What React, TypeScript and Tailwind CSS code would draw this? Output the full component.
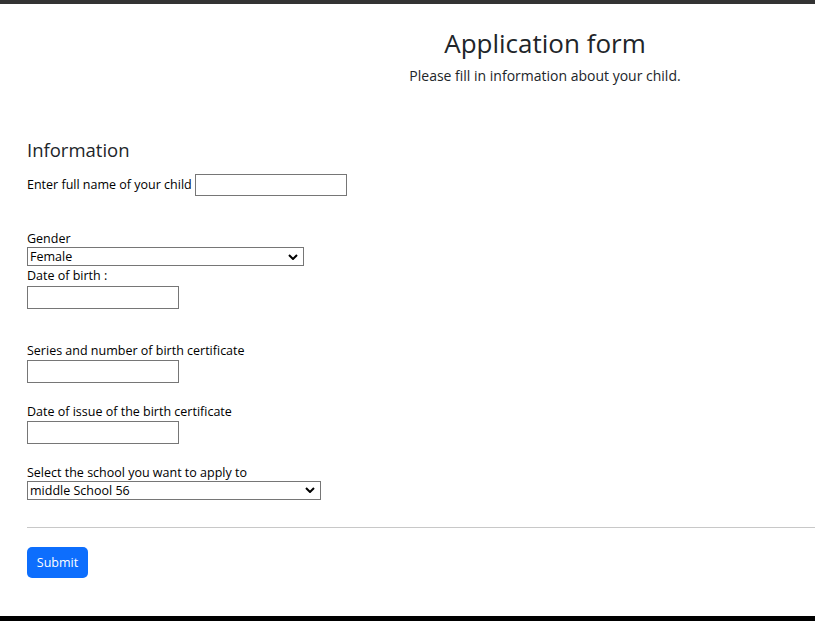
import React from "react";

export default function App() {
  const font = { fontFamily: '"Open Sans", "Noto Sans", sans-serif' };
  const arrow = {
    backgroundImage:
      "url(\"data:image/svg+xml;utf8,<svg xmlns='http://www.w3.org/2000/svg' width='10' height='6' viewBox='0 0 10 6'><path d='M1 1l4 4 4-4' stroke='black' stroke-width='2' fill='none'/></svg>\")",
    backgroundPosition: "right 5px center",
  };
  return (
    <div className="w-[815px] h-[621px] overflow-hidden bg-white flex flex-col text-[#212529]" style={font}>
      <div className="h-[4px] bg-[#333333] shrink-0" />
      <div className="flex-1 pl-[27px]">
        <div className="w-[1036px]">
          <div className="text-center mt-[22px]">
            <h2 className="text-[26px] leading-[34px] font-medium">Application form</h2>
            <p className="text-[14px] leading-[22px] font-normal mt-[5px] text-[#212529]">Please fill in information about your child.</p>
          </div>
          <form className="mt-[51px] text-[12.5px] text-black">
            <h4 className="text-[18.5px] leading-[24px] font-normal text-[#212529]">Information</h4>
            <div className="mt-[12px] flex items-center gap-[3px]">
              <label>Enter full name of your child</label>
              <input className="w-[152px] h-[22px] border border-[#767676] px-1" />
            </div>
            <div className="mt-[34px]">
              <label className="block leading-[17px]">Gender</label>
              <select className="w-[277px] h-[19px] border border-[#767676] text-[12.5px] pl-[2px] appearance-none bg-no-repeat" defaultValue="Female" style={arrow}>
                <option>Female</option>
                <option>Male</option>
              </select>
              <label className="block leading-[17px]">Date of birth :</label>
              <input className="block w-[152px] h-[23px] border border-[#767676] mt-[2px]" />
            </div>
            <div className="mt-[33px]">
              <label className="block leading-[17px]">Series and number of birth certificate</label>
              <input className="block w-[152px] h-[23px] border border-[#767676] mt-[1px]" />
            </div>
            <div className="mt-[20px]">
              <label className="block leading-[17px]">Date of issue of the birth certificate</label>
              <input className="block w-[152px] h-[23px] border border-[#767676] mt-[1px]" />
            </div>
            <div className="mt-[20px]">
              <label className="block leading-[17px]">Select the school you want to apply to</label>
              <select className="block w-[294px] h-[19px] border border-[#767676] text-[12.5px] pl-[2px] appearance-none bg-no-repeat" defaultValue="middle School 56" style={arrow}>
                <option>middle School 56</option>
              </select>
            </div>
            <hr className="mt-[27px] border-0 h-px bg-[#c8c8c8]" />
            <button type="button" className="mt-[19px] w-[61px] h-[31px] pt-[3px] rounded-[5px] bg-[#0d6efd] text-white text-[12.5px]">Submit</button>
          </form>
        </div>
      </div>
      <div className="h-[5px] bg-black shrink-0" />
    </div>
  );
}
